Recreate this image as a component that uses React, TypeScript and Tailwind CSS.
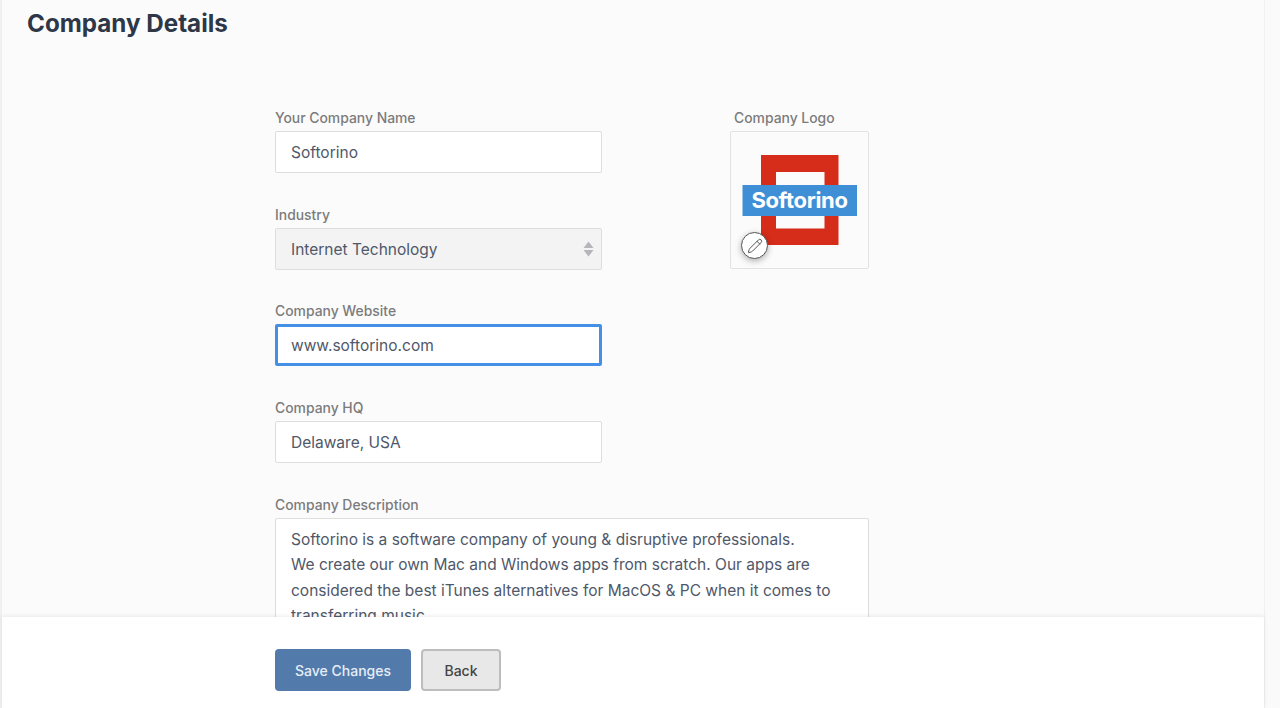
import { Pencil } from "lucide-react";

const labelClass = "block text-[13.900px] leading-[20px] font-medium text-[#7b7b7b] mb-[3px]";
const inputClass =
  "block w-full h-[42px] pl-[15px] pr-4 text-[15.500px] text-[#4f5869] bg-white border border-[#dedede] rounded-[2px] outline-none";

const Field = ({ label, value }: { label: string; value: string }) => (
  <div>
    <label className={labelClass}>{label}</label>
    <input className={inputClass} defaultValue={value} readOnly />
  </div>
);

const Logo = () => (
  <svg width="136" height="136" viewBox="0 0 136 136" className="block">
    <path d="M30 23h77.500v90h-77.500z M45 40v56.500h48.500v-56.500z" fill="#d62c1a" fillRule="evenodd" />
    <rect x="11.500" y="53" width="114.500" height="31" fill="#3f8fd6" />
    <text
      x="68.500"
      y="76"
      textAnchor="middle"
      fill="#ffffff"
      fontSize="22"
      fontWeight="700"
      letterSpacing="-0.35"
      fontFamily="Inter, sans-serif"
    >
      Softorino
    </text>
  </svg>
);

const App = () => {
  return (
    <div className="flex h-[708px] w-[1280px] overflow-hidden bg-[#fafafa] font-['Inter',sans-serif]">
      <div className="w-[2px] bg-[#f0f0f0]" />
      <div className="flex flex-col w-[1263px] h-full bg-white border-r border-[#f0f0f0]">
        <div className="h-[617px] overflow-hidden bg-[#fbfbfc]">
          <h1 className="pl-[25px] pt-[9px] text-[24.200px] leading-[30px] font-bold text-[#2d3748]">
            Company Details
          </h1>
          <div className="flex gap-[128px] ml-[273px] mt-[69px]">
            <div className="w-[327px] flex flex-col gap-[31.700px]">
              <Field label="Your Company Name" value="Softorino" />
              <div>
                <label className={labelClass}>Industry</label>
                <div className="flex items-center justify-between h-[42px] pl-[15px] pr-[7px] pt-px text-[15.500px] text-[#4f5869] bg-[#f3f3f4] border border-[#dedede] rounded-[2px]">
                  <span>Internet Technology</span>
                  <svg width="11" height="16" viewBox="0 0 11 16" fill="#b4b6ba">
                    <path d="M5.500 0.500L10.500 7H0.500z M0.500 9H10.500L5.500 15.500z" />
                  </svg>
                </div>
              </div>
              <div>
                <label className={labelClass}>Company Website</label>
                <input
                  className="block w-full h-[42px] pl-[13px] pr-4 text-[15.500px] text-[#4f5869] bg-white border-[3px] border-[#4390e6] rounded-[2px] outline-none"
                  defaultValue="www.softorino.com"
                  readOnly
                />
              </div>
              <Field label="Company HQ" value="Delaware, USA" />
            </div>
            <div className="w-[139px]">
              <label className={`${labelClass} pl-1`}>Company Logo</label>
              <div className="relative h-[138px] bg-[#fbfbfb] border border-[#e2e2e2] rounded-[2px]">
                <Logo />
                <div className="absolute left-[10px] top-[100px] flex items-center justify-center w-[27px] h-[27px] rounded-full bg-white border border-[#555555] shadow-[0_2px_6px_rgba(0,0,0,0.3)]">
                  <Pencil size={16} strokeWidth={1.5} className="text-[#555555]" />
                </div>
              </div>
            </div>
          </div>
          <div className="ml-[273px] mt-[32px] w-[594px]">
            <label className={labelClass}>Company Description</label>
            <textarea
              className="block w-full h-[140px] pl-[15px] pr-4 py-[7.800px] text-[15.500px] leading-[25.500px] text-[#4f5869] bg-white border border-[#dedede] rounded-[2px] outline-none resize-none overflow-hidden"
              defaultValue={
                "Softorino is a software company of young & disruptive professionals.\nWe create our own Mac and Windows apps from scratch. Our apps are considered the best iTunes alternatives for MacOS & PC when it comes to transferring music."
              }
              readOnly
            />
          </div>
        </div>
        <div className="flex-1 flex items-start gap-[10px] pl-[273px] pt-[32px] bg-white shadow-[0_-1px_4px_rgba(0,0,0,0.08)] z-10">
          <button className="w-[136px] h-[42px] text-[14px] font-medium text-[#e6edf6] bg-[#527bac] rounded-[4px]">
            Save Changes
          </button>
          <button className="w-[80px] h-[42px] text-[14px] font-medium text-[#444444] bg-[#e8e8e8] border-2 border-[#bdbdbd] rounded-[4px]">
            Back
          </button>
        </div>
      </div>
    </div>
  );
};

export default App;
